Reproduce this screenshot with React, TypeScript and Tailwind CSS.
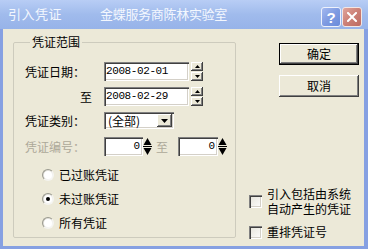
const sunken =
  'shadow-[inset_1px_1px_0_#808080,inset_2px_2px_0_#404040,inset_-1px_-1px_0_#ffffff,inset_-2px_-2px_0_#d4d0c8]';
const raised =
  'shadow-[inset_-1px_-1px_0_#404040,inset_1px_1px_0_#ffffff,inset_-2px_-2px_0_#808080,inset_2px_2px_0_#ece9d8]';

function SmallSpin() {
  return (
    <div className="ml-[2px] flex flex-col gap-[1px] w-[12px] h-[19px]">
      <div className={`h-[9px] bg-[#ece9d8] flex items-center justify-center ${raised}`}>
        <svg width="5" height="3" viewBox="0 0 5 3">
          <polygon points="2.5,0 5,3 0,3" fill="#000" />
        </svg>
      </div>
      <div className={`h-[9px] bg-[#ece9d8] flex items-center justify-center ${raised}`}>
        <svg width="5" height="3" viewBox="0 0 5 3">
          <polygon points="0,0 5,0 2.5,3" fill="#000" />
        </svg>
      </div>
    </div>
  );
}

function NumArrows() {
  return (
    <svg width="9" height="19" viewBox="0 0 9 19" className="shrink-0">
      <polygon points="4.5,1 8.5,8 0.5,8" fill="#000" />
      <rect x="0" y="9" width="9" height="1" fill="#000" />
      <polygon points="0.5,11 8.5,11 4.5,18" fill="#000" />
    </svg>
  );
}

function DateField({ value }: { value: string }) {
  return (
    <div className="flex items-center">
      <div className={`w-[85px] h-[19px] bg-white flex items-center pl-[2px] ${sunken}`}>
        <span className="font-['Liberation_Mono',monospace] text-[11px] tracking-[-0.4px] text-black leading-none">
          {value}
        </span>
      </div>
      <SmallSpin />
    </div>
  );
}

function NumField({ width }: { width: string }) {
  return (
    <div className={`${width} h-[19px] bg-white flex items-center justify-end pr-[3px] ${sunken}`}>
      <span className="font-['Liberation_Mono',monospace] text-[11px] text-black leading-none">0</span>
    </div>
  );
}

function Radio({ label, checked }: { label: string; checked?: boolean }) {
  return (
    <div className="h-[24px] flex items-center pl-[17px]">
      <div className="w-[12px] h-[12px] rounded-full bg-gradient-to-br from-[#d6d4cc] to-white border border-t-[#9a9a90] border-l-[#9a9a90] border-r-[#f4f4f0] border-b-[#f4f4f0] flex items-center justify-center">
        <div className="w-[8px] h-[8px] rounded-full bg-white flex items-center justify-center">
          {checked && <div className="w-[4px] h-[4px] rounded-full bg-black" />}
        </div>
      </div>
      <span className="ml-[5px]">{label}</span>
    </div>
  );
}

export default function App() {
  return (
    <div className="w-[368px] h-[249px] flex flex-col overflow-hidden bg-[#86a0e2] text-[12px] leading-[14px] text-black font-['Noto_Sans_CJK_SC',sans-serif]">
      {/* Title bar (inactive) */}
      <div className="h-[29px] shrink-0 flex items-start bg-gradient-to-b from-[#b8cdf5] via-[#a0bbec] to-[#97b3e9] text-[#f3f7fe] pl-[8px] pr-[6px]">
        <div className="flex items-center h-[29px] text-[13px] pb-[1px]">
          <span className="tracking-[0.5px]">引入凭证</span>
          <span className="ml-[38px] tracking-[-0.3px]">金蝶服务商陈林实验室</span>
        </div>
        <div className="ml-auto mt-[7px] flex gap-[1px]">
          <div className="w-[20px] h-[20px] rounded-[3px] border border-[#eef2fc] bg-gradient-to-br from-[#a3b9ef] via-[#7f9be2] to-[#6a8bda] flex items-center justify-center">
            <span className="font-['Liberation_Sans',sans-serif] font-bold text-[15px] leading-none text-white">?</span>
          </div>
          <div className="w-[20px] h-[20px] rounded-[3px] border border-[#f3e6e4] bg-gradient-to-br from-[#e0a59c] via-[#cc8076] to-[#bd6b61] flex items-center justify-center">
            <svg width="10" height="10" viewBox="0 0 10 10">
              <path d="M1 1 L9 9 M9 1 L1 9" stroke="#fff" strokeWidth="2" strokeLinecap="square" />
            </svg>
          </div>
        </div>
      </div>

      {/* Body */}
      <div className="flex-1 flex bg-[#ece9d8] border-l-[3px] border-r-[4px] border-b-[3px] border-[#86a0e2] pl-[10px]">
        <fieldset className="mt-[6px] self-start w-[223px] min-w-0 border border-[#cdcbbd] rounded-[2px] pl-[11px] pb-[2px]">
          <legend className="ml-[5px] px-[2px] leading-[14px]">凭证范围</legend>

          <div className="mt-[13px] flex items-center h-[19px]">
            <span className="w-[79px]">凭证日期：</span>
            <DateField value="2008-02-01" />
          </div>

          <div className="mt-[6px] flex items-center h-[19px]">
            <span className="w-[79px] pl-[55px]">至</span>
            <DateField value="2008-02-29" />
          </div>

          <div className="mt-[6px] flex items-center h-[17px]">
            <span className="w-[79px]">凭证类别：</span>
            <div className={`w-[70px] h-[17px] bg-white flex items-center p-[2px] ${sunken}`}>
              <span className="flex-1 pl-[2px] leading-none">(全部)</span>
              <div className={`w-[15px] h-[13px] bg-[#ece9d8] flex items-center justify-center ${raised}`}>
                <svg width="7" height="4" viewBox="0 0 7 4">
                  <polygon points="0,0 7,0 3.5,4" fill="#000" />
                </svg>
              </div>
            </div>
          </div>

          <div className="mt-[8px] flex items-center h-[19px]">
            <span className="w-[79px] text-[#aca899]">凭证编号：</span>
            <NumField width="w-[39px]" />
            <NumArrows />
            <span className="ml-[4px] text-[#aca899]">至</span>
            <div className="ml-[10px] flex items-center">
              <NumField width="w-[40px]" />
              <NumArrows />
            </div>
          </div>

          <div className="mt-[7px] flex flex-col">
            <Radio label="已过账凭证" />
            <Radio label="未过账凭证" checked />
            <Radio label="所有凭证" />
          </div>
        </fieldset>

        <div className="ml-[13px] mt-[14px] flex flex-col">
          <button className="ml-[30px] w-[80px] h-[22px] border border-black bg-[#ece9d8] flex items-center justify-center">
            <span className={`w-full h-full flex items-center justify-center ${raised}`}>确定</span>
          </button>
          <button className={`ml-[30px] mt-[10px] w-[80px] h-[22px] bg-[#ece9d8] flex items-center justify-center ${raised}`}>
            取消
          </button>

          <div className="mt-[89px] flex items-center">
            <div className={`w-[13px] h-[13px] bg-gradient-to-br from-[#e4e2d8] to-white ${sunken}`} />
            <span className="ml-[5px] leading-[15px]">
              引入包括由系统
              <br />
              自动产生的凭证
            </span>
          </div>

          <div className="mt-[9px] flex items-center h-[14px]">
            <div className={`w-[13px] h-[13px] bg-gradient-to-br from-[#e4e2d8] to-white ${sunken}`} />
            <span className="ml-[5px] leading-[14px]">重排凭证号</span>
          </div>
        </div>
      </div>
    </div>
  );
}
